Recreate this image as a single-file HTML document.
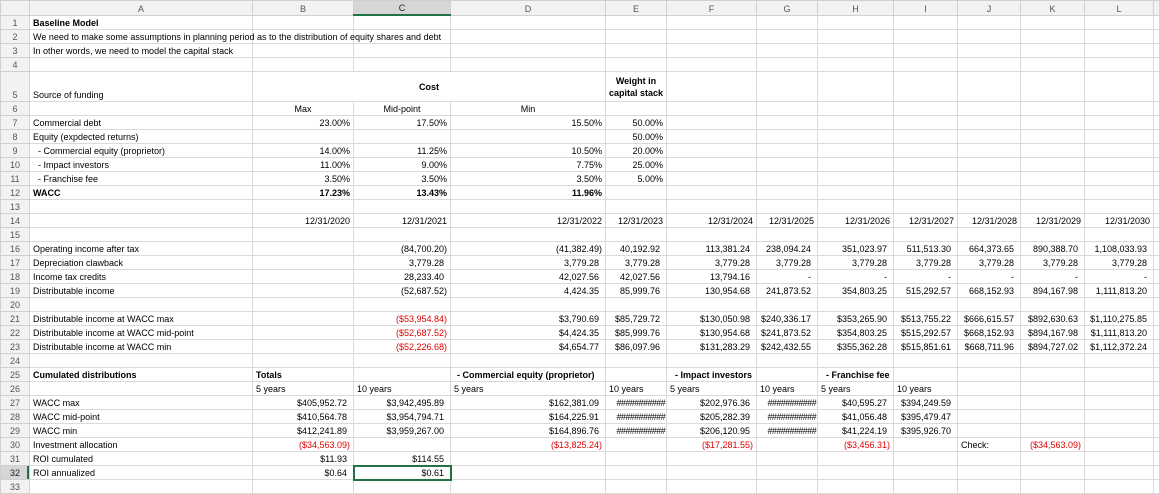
<!DOCTYPE html>
<html><head><meta charset="utf-8"><style>
body{margin:0;background:#fff;width:1159px;height:493px;overflow:hidden}
table{border-collapse:collapse;table-layout:fixed;width:1159px;font-family:"Liberation Sans",sans-serif;font-size:9px;color:#000}
td{border:1px solid #dadada;padding:0 3px;white-space:nowrap;overflow:visible;height:13px;line-height:12px;vertical-align:bottom}
tr.h td{background:#f2f2f2;text-align:center;color:#555;border-color:#d0d0d0}
td.n{background:#f2f2f2;text-align:center;color:#555;border-color:#d0d0d0;padding:0}
.r{text-align:right}.c{text-align:center}.b{font-weight:bold}.red{color:#e00000}
.p{padding-right:6px}
.hs{text-align:right;padding:0 1px;letter-spacing:-0.6px;overflow:hidden}
</style></head><body>
<table>
<colgroup><col style="width:29px"><col style="width:223px"><col style="width:101px"><col style="width:97px"><col style="width:155px"><col style="width:61px"><col style="width:90px"><col style="width:61px"><col style="width:76px"><col style="width:64px"><col style="width:63px"><col style="width:64px"><col style="width:69px"><col style="width:6px"></colgroup>
<tr class="h"><td style="background:#f2f2f2"></td><td>A</td><td>B</td><td style="background:#d6d6d6;color:#222;border-bottom:2px solid #217346">C</td><td>D</td><td>E</td><td>F</td><td>G</td><td>H</td><td>I</td><td>J</td><td>K</td><td>L</td><td></td></tr>
<tr><td class="n">1</td><td class="b">Baseline Model</td><td></td><td></td><td></td><td></td><td></td><td></td><td></td><td></td><td></td><td></td><td></td><td></td></tr>
<tr><td class="n">2</td><td>We need to make some assumptions in planning period as to the distribution of equity shares and debt</td><td></td><td></td><td></td><td></td><td></td><td></td><td></td><td></td><td></td><td></td><td></td><td></td></tr>
<tr><td class="n">3</td><td>In other words, we need to model the capital stack</td><td></td><td></td><td></td><td></td><td></td><td></td><td></td><td></td><td></td><td></td><td></td><td></td></tr>
<tr><td class="n">4</td><td></td><td></td><td></td><td></td><td></td><td></td><td></td><td></td><td></td><td></td><td></td><td></td><td></td></tr>
<tr style="height:30px"><td class="n" style="height:29px">5</td><td>Source of funding</td><td colspan="3" class="c b" style="vertical-align:middle">Cost</td><td class="c b" style="vertical-align:middle;white-space:normal;line-height:12px;padding:0">Weight in capital stack</td><td></td><td></td><td></td><td></td><td></td><td></td><td></td><td></td></tr>
<tr><td class="n">6</td><td></td><td class="c">Max</td><td class="c">Mid-point</td><td class="c">Min</td><td></td><td></td><td></td><td></td><td></td><td></td><td></td><td></td><td></td></tr>
<tr><td class="n">7</td><td>Commercial debt</td><td class="r">23.00%</td><td class="r">17.50%</td><td class="r">15.50%</td><td class="r">50.00%</td><td></td><td></td><td></td><td></td><td></td><td></td><td></td><td></td></tr>
<tr><td class="n">8</td><td>Equity (expdected returns)</td><td></td><td></td><td></td><td class="r">50.00%</td><td></td><td></td><td></td><td></td><td></td><td></td><td></td><td></td></tr>
<tr><td class="n">9</td><td>&nbsp; - Commercial equity (proprietor)</td><td class="r">14.00%</td><td class="r">11.25%</td><td class="r">10.50%</td><td class="r">20.00%</td><td></td><td></td><td></td><td></td><td></td><td></td><td></td><td></td></tr>
<tr><td class="n">10</td><td>&nbsp; - Impact investors</td><td class="r">11.00%</td><td class="r">9.00%</td><td class="r">7.75%</td><td class="r">25.00%</td><td></td><td></td><td></td><td></td><td></td><td></td><td></td><td></td></tr>
<tr><td class="n">11</td><td>&nbsp; - Franchise fee</td><td class="r">3.50%</td><td class="r">3.50%</td><td class="r">3.50%</td><td class="r">5.00%</td><td></td><td></td><td></td><td></td><td></td><td></td><td></td><td></td></tr>
<tr class="b"><td class="n" style="font-weight:normal">12</td><td>WACC</td><td class="r">17.23%</td><td class="r">13.43%</td><td class="r">11.96%</td><td></td><td></td><td></td><td></td><td></td><td></td><td></td><td></td><td></td></tr>
<tr><td class="n">13</td><td></td><td></td><td></td><td></td><td></td><td></td><td></td><td></td><td></td><td></td><td></td><td></td><td></td></tr>
<tr><td class="n">14</td><td></td><td class="r">12/31/2020</td><td class="r">12/31/2021</td><td class="r">12/31/2022</td><td class="r">12/31/2023</td><td class="r">12/31/2024</td><td class="r">12/31/2025</td><td class="r">12/31/2026</td><td class="r">12/31/2027</td><td class="r">12/31/2028</td><td class="r">12/31/2029</td><td class="r">12/31/2030</td><td></td></tr>
<tr><td class="n">15</td><td></td><td></td><td></td><td></td><td></td><td></td><td></td><td></td><td></td><td></td><td></td><td></td><td></td></tr>
<tr><td class="n">16</td><td>Operating income after tax</td><td></td><td class="r">(84,700.20)</td><td class="r">(41,382.49)</td><td class="r p">40,192.92</td><td class="r p">113,381.24</td><td class="r p">238,094.24</td><td class="r p">351,023.97</td><td class="r p">511,513.30</td><td class="r p">664,373.65</td><td class="r p">890,388.70</td><td class="r p">1,108,033.93</td><td></td></tr>
<tr><td class="n">17</td><td>Depreciation clawback</td><td></td><td class="r p">3,779.28</td><td class="r p">3,779.28</td><td class="r p">3,779.28</td><td class="r p">3,779.28</td><td class="r p">3,779.28</td><td class="r p">3,779.28</td><td class="r p">3,779.28</td><td class="r p">3,779.28</td><td class="r p">3,779.28</td><td class="r p">3,779.28</td><td></td></tr>
<tr><td class="n">18</td><td>Income tax credits</td><td></td><td class="r p">28,233.40</td><td class="r p">42,027.56</td><td class="r p">42,027.56</td><td class="r p">13,794.16</td><td class="r p">-</td><td class="r p">-</td><td class="r p">-</td><td class="r p">-</td><td class="r p">-</td><td class="r p">-</td><td></td></tr>
<tr><td class="n">19</td><td>Distributable income</td><td></td><td class="r">(52,687.52)</td><td class="r p">4,424.35</td><td class="r p">85,999.76</td><td class="r p">130,954.68</td><td class="r p">241,873.52</td><td class="r p">354,803.25</td><td class="r p">515,292.57</td><td class="r p">668,152.93</td><td class="r p">894,167.98</td><td class="r p">1,111,813.20</td><td></td></tr>
<tr><td class="n">20</td><td></td><td></td><td></td><td></td><td></td><td></td><td></td><td></td><td></td><td></td><td></td><td></td><td></td></tr>
<tr><td class="n">21</td><td>Distributable income at WACC max</td><td></td><td class="r red">($53,954.84)</td><td class="r p">$3,790.69</td><td class="r p">$85,729.72</td><td class="r p">$130,050.98</td><td class="r p">$240,336.17</td><td class="r p">$353,265.90</td><td class="r p">$513,755.22</td><td class="r p">$666,615.57</td><td class="r p">$892,630.63</td><td class="r p">$1,110,275.85</td><td></td></tr>
<tr><td class="n">22</td><td>Distributable income at WACC mid-point</td><td></td><td class="r red">($52,687.52)</td><td class="r p">$4,424.35</td><td class="r p">$85,999.76</td><td class="r p">$130,954.68</td><td class="r p">$241,873.52</td><td class="r p">$354,803.25</td><td class="r p">$515,292.57</td><td class="r p">$668,152.93</td><td class="r p">$894,167.98</td><td class="r p">$1,111,813.20</td><td></td></tr>
<tr><td class="n">23</td><td>Distributable income at WACC min</td><td></td><td class="r red">($52,226.68)</td><td class="r p">$4,654.77</td><td class="r p">$86,097.96</td><td class="r p">$131,283.29</td><td class="r p">$242,432.55</td><td class="r p">$355,362.28</td><td class="r p">$515,851.61</td><td class="r p">$668,711.96</td><td class="r p">$894,727.02</td><td class="r p">$1,112,372.24</td><td></td></tr>
<tr><td class="n">24</td><td></td><td></td><td></td><td></td><td></td><td></td><td></td><td></td><td></td><td></td><td></td><td></td><td></td></tr>
<tr><td class="n">25</td><td class="b">Cumulated distributions</td><td class="b">Totals</td><td></td><td class="b" style="padding-left:6px">- Commercial equity (proprietor)</td><td></td><td class="b" style="padding-left:8px">- Impact investors</td><td></td><td class="b" style="padding-left:8px">- Franchise fee</td><td></td><td></td><td></td><td></td><td></td></tr>
<tr><td class="n">26</td><td></td><td>5 years</td><td>10 years</td><td>5 years</td><td>10 years</td><td>5 years</td><td>10 years</td><td>5 years</td><td>10 years</td><td></td><td></td><td></td><td></td></tr>
<tr><td class="n">27</td><td>WACC max</td><td class="r p">$405,952.72</td><td class="r p">$3,942,495.89</td><td class="r p">$162,381.09</td><td class="hs">###########</td><td class="r p">$202,976.36</td><td class="hs">###########</td><td class="r p">$40,595.27</td><td class="r p">$394,249.59</td><td></td><td></td><td></td><td></td></tr>
<tr><td class="n">28</td><td>WACC mid-point</td><td class="r p">$410,564.78</td><td class="r p">$3,954,794.71</td><td class="r p">$164,225.91</td><td class="hs">###########</td><td class="r p">$205,282.39</td><td class="hs">###########</td><td class="r p">$41,056.48</td><td class="r p">$395,479.47</td><td></td><td></td><td></td><td></td></tr>
<tr><td class="n">29</td><td>WACC min</td><td class="r p">$412,241.89</td><td class="r p">$3,959,267.00</td><td class="r p">$164,896.76</td><td class="hs">###########</td><td class="r p">$206,120.95</td><td class="hs">###########</td><td class="r p">$41,224.19</td><td class="r p">$395,926.70</td><td></td><td></td><td></td><td></td></tr>
<tr><td class="n">30</td><td>Investment allocation</td><td class="r red">($34,563.09)</td><td></td><td class="r red">($13,825.24)</td><td></td><td class="r red">($17,281.55)</td><td></td><td class="r red">($3,456.31)</td><td></td><td>Check:</td><td class="r red">($34,563.09)</td><td></td><td></td></tr>
<tr><td class="n">31</td><td>ROI cumulated</td><td class="r p">$11.93</td><td class="r p">$114.55</td><td></td><td></td><td></td><td></td><td></td><td></td><td></td><td></td><td></td><td></td></tr>
<tr><td class="n" style="background:#d6d6d6;color:#222;box-shadow:inset -2px 0 #217346">32</td><td>ROI annualized</td><td class="r p">$0.64</td><td class="r p" style="outline:2px solid #217346;outline-offset:-1px">$0.61</td><td></td><td></td><td></td><td></td><td></td><td></td><td></td><td></td><td></td><td></td></tr>
<tr><td class="n">33</td><td></td><td></td><td></td><td></td><td></td><td></td><td></td><td></td><td></td><td></td><td></td><td></td><td></td></tr>
</table>
</body></html>
